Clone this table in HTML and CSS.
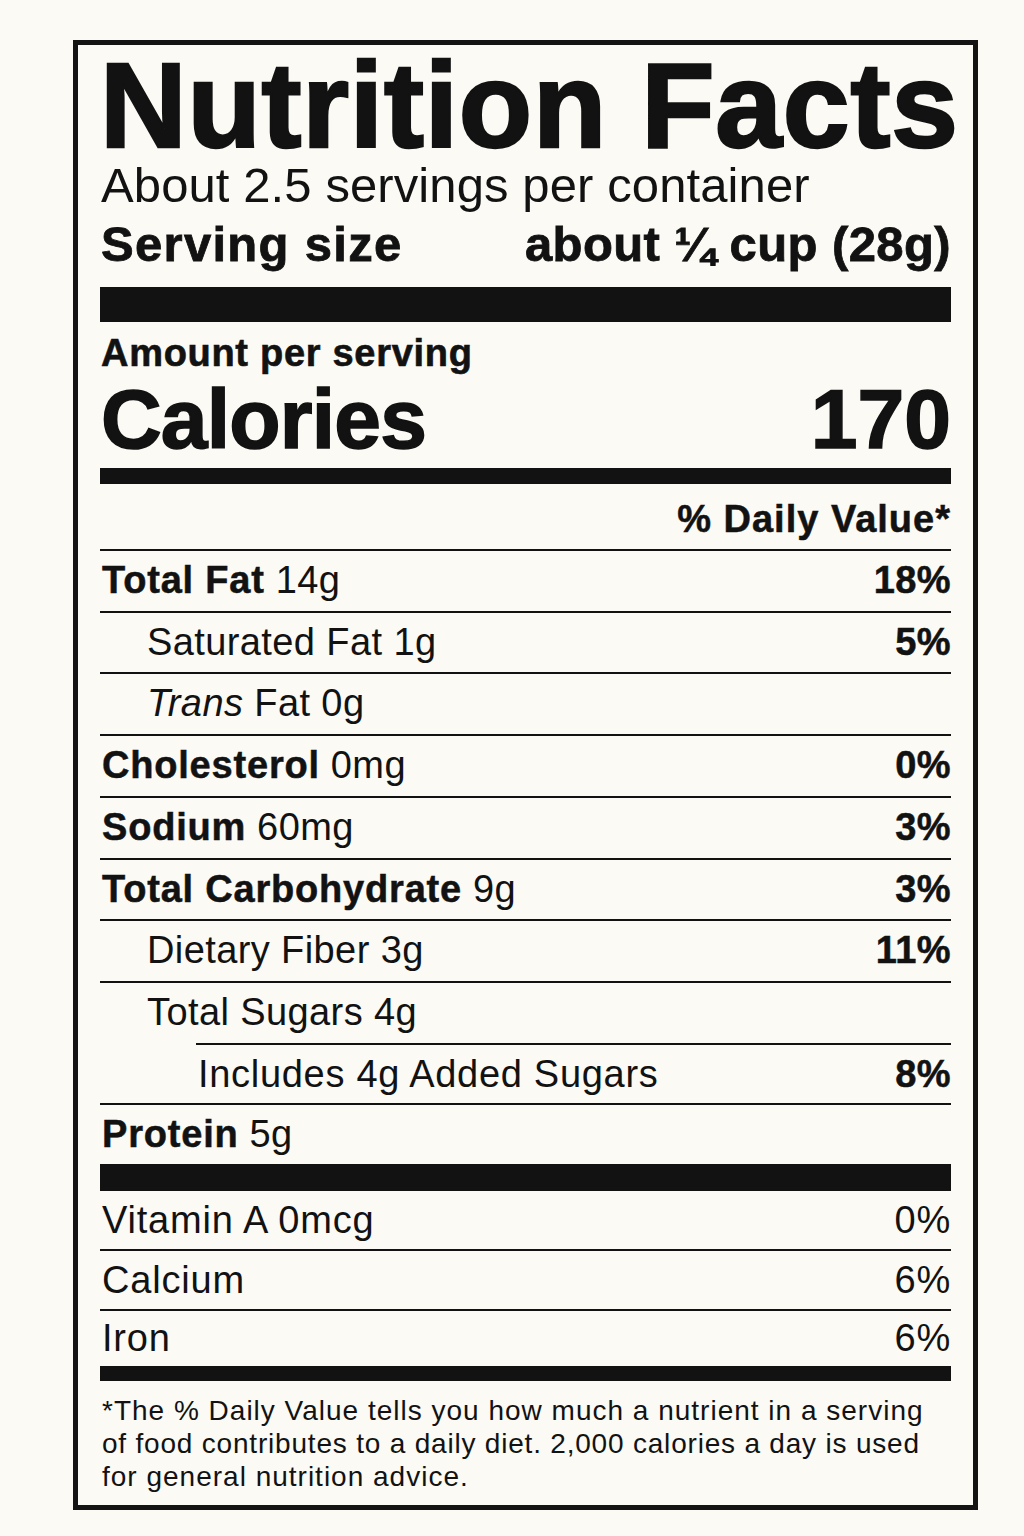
FILE: index.html
```html
<!DOCTYPE html>
<html lang="en">
<head>
<meta charset="utf-8">
<title>Nutrition Facts</title>
<link rel="stylesheet" href="styles.css">
</head>
<body>
<div class="label">
  <h1 class="title">Nutrition Facts</h1>
  <p class="servings">About 2.5 servings per container</p>
  <div class="serving-size"><span class="ss-label">Serving size</span><span>about ¼ cup (28g)</span></div>
  <div class="bar bar-xl"></div>
  <p class="amount">Amount per serving</p>
  <div class="calories"><span class="cal-label">Calories</span><span>170</span></div>
  <div class="bar bar-md"></div>
  <div class="dv-head">% Daily Value*</div>

  <div class="row"><span><b>Total Fat</b> 14g</span><b>18%</b></div>
  <div class="row sub"><span>Saturated Fat 1g</span><b>5%</b></div>
  <div class="row sub"><span><i>Trans</i> Fat 0g</span></div>
  <div class="row"><span><b>Cholesterol</b> 0mg</span><b>0%</b></div>
  <div class="row"><span><b>Sodium</b> 60mg</span><b>3%</b></div>
  <div class="row"><span><b>Total Carbohydrate</b> 9g</span><b>3%</b></div>
  <div class="row sub"><span>Dietary Fiber 3g</span><b>11%</b></div>
  <div class="row sub no-line"><span>Total Sugars 4g</span></div>
  <div class="row-wrap">
    <div class="row sub2"><span>Includes 4g Added Sugars</span><b>8%</b></div>
  </div>
  <div class="row no-line"><span><b>Protein</b> 5g</span></div>
  <div class="bar bar-lg"></div>

  <div class="row vit"><span>Vitamin A 0mcg</span><span>0%</span></div>
  <div class="row vit"><span>Calcium</span><span>6%</span></div>
  <div class="row vit last"><span>Iron</span><span>6%</span></div>
  <div class="bar bar-sm"></div>

  <p class="foot"><span class="foot-line">*The % Daily Value tells you how much a nutrient in a serving</span><br><span class="foot-line tight">of food contributes to a daily diet. 2,000 calories a day is used</span><br><span class="foot-line">for general nutrition advice.</span></p>
</div>
</body>
</html>
```

FILE: styles.css
```css
html, body {
  margin: 0;
  padding: 0;
  background: #fbfaf5;
}

body {
  font-family: "Liberation Sans", Arial, Helvetica, sans-serif;
  color: #121212;
}

.label {
  box-sizing: border-box;
  width: 905px;
  margin: 40px 0 0 73px;
  border: 5px solid #141414;
  padding: 5px 22px 12px 22px;
  background: #fbfaf5;
}

.title {
  margin: 0;
  font-size: 120px;
  line-height: 110px;
  font-weight: 700;
  letter-spacing: 0.8px;
  -webkit-text-stroke: 2.5px #121212;
  white-space: nowrap;
}

.servings {
  margin: 1px 0 0 1px;
  font-size: 49px;
  line-height: 49px;
  font-weight: 400;
  letter-spacing: 0.1px;
}

.serving-size {
  margin-top: 10px;
  padding-left: 1px;
  display: flex;
  justify-content: space-between;
  font-size: 49px;
  line-height: 49px;
  font-weight: 700;
  letter-spacing: 0.4px;
  -webkit-text-stroke: 0.8px #121212;
}

.ss-label {
  letter-spacing: 1.3px;
}

.bar {
  background: #121212;
}

.bar-xl {
  margin-top: 18px;
  height: 35px;
}

.bar-md {
  margin-top: 7px;
  height: 16px;
}

.bar-lg {
  height: 27px;
}

.bar-sm {
  height: 15px;
}

.amount {
  margin: 12px 0 0 1px;
  font-size: 38px;
  line-height: 38px;
  font-weight: 700;
  letter-spacing: 0.7px;
  -webkit-text-stroke: 0.6px #121212;
}

.calories {
  margin-top: 5px;
  padding-left: 1px;
  display: flex;
  justify-content: space-between;
  font-size: 84px;
  line-height: 84px;
  font-weight: 700;
  -webkit-text-stroke: 1.6px #121212;
}

.cal-label {
  letter-spacing: -0.8px;
}

.dv-head {
  padding: 16px 0 11px 0;
  border-bottom: 2px solid #121212;
  text-align: right;
  font-size: 38px;
  line-height: 38px;
  font-weight: 700;
  letter-spacing: 1px;
  -webkit-text-stroke: 0.5px #121212;
}

.row {
  display: flex;
  justify-content: space-between;
  align-items: baseline;
  padding-left: 2px;
  font-size: 38px;
  line-height: 59.7px;
  letter-spacing: 0.4px;
  border-bottom: 2px solid #121212;
  white-space: nowrap;
}

.row b {
  font-weight: 700;
  letter-spacing: 0.8px;
  -webkit-text-stroke: 0.5px #121212;
}

.row > b:last-child {
  letter-spacing: 0.4px;
}

.row i {
  font-style: italic;
}

.row.sub {
  padding-left: 47px;
}

.row.no-line {
  border-bottom: none;
}

.row-wrap {
  padding-left: 96px;
  border-bottom: 2px solid #121212;
}

.row.sub2 {
  padding-left: 2px;
  border-bottom: none;
  border-top: 2px solid #121212;
  line-height: 58px;
  letter-spacing: 0.7px;
}

.row.vit {
  line-height: 58px;
  letter-spacing: 0.8px;
}

.row.vit.last {
  line-height: 55px;
  border-bottom: none;
}

.foot {
  margin: 13px 0 0 2px;
  font-size: 28px;
  line-height: 33px;
  letter-spacing: 1px;
  white-space: nowrap;
}

.foot-line.tight {
  letter-spacing: 0.8px;
}
```
